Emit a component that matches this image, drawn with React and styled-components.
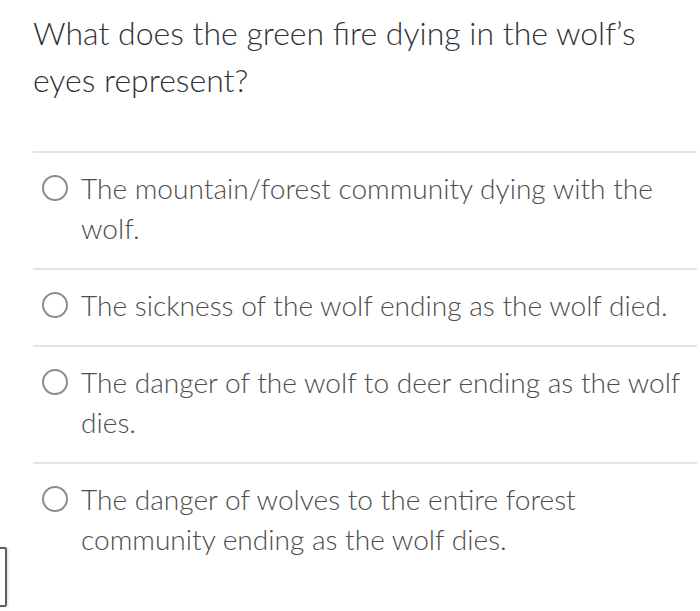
import styled, { createGlobalStyle } from 'styled-components';

const Global = createGlobalStyle`
    body {
        margin:0;
        background:#fff;
        font-family:Lato, "Noto Sans", sans-serif;
    }
`
const Page = styled.div`
    position:relative;
    width:700px;
    height:611px;
    overflow:hidden;
    background:#fff;
`
const Quiz = styled.div`
    padding:9px 3px 0 33px;
`
const Question = styled.div`
    font-size:32px;
    font-weight:300;
    line-height:47px;
    color:#2f3337;
    margin-bottom:48px;
`
const Answers = styled.div`
    display:flex;
    flex-direction:column;
`
const Answer = styled.label`
    display:flex;
    align-items:flex-start;
    gap:13px;
    border-top:2px solid #e3e3e3;
    padding:15px 0 20px 9px;
`
const Radio = styled.span`
    flex:none;
    width:22px;
    height:22px;
    margin-top:7px;
    border:2.5px solid #8c8c8c;
    border-radius:50%;
`
const AnswerText = styled.span`
    font-size:28.1px;
    font-weight:300;
    line-height:40px;
    color:#4d4d4d;
`
const EdgeBox = styled.div`
    position:absolute;
    left:-10px;
    top:547px;
    width:13px;
    height:56px;
    border:2px solid #5a5f66;
    border-radius:2px;
    box-shadow:1px 0 3px rgba(0,0,0,0.15);
`

const answers = [
    "The mountain/forest community dying with the wolf.",
    "The sickness of the wolf ending as the wolf died.",
    "The danger of the wolf to deer ending as the wolf dies.",
    "The danger of wolves to the entire forest community ending as the wolf dies.",
]

export default function App()
{
    return(
        <Page>
            <Global/>
            <Quiz>
                <Question>What does the green fire dying in the wolf’s eyes represent?</Question>
                <Answers>
                    {answers.map((a)=>(
                        <Answer key={a}>
                            <Radio/>
                            <AnswerText>{a}</AnswerText>
                        </Answer>
                    ))}
                </Answers>
            </Quiz>
            <EdgeBox/>
        </Page>
    )
}
